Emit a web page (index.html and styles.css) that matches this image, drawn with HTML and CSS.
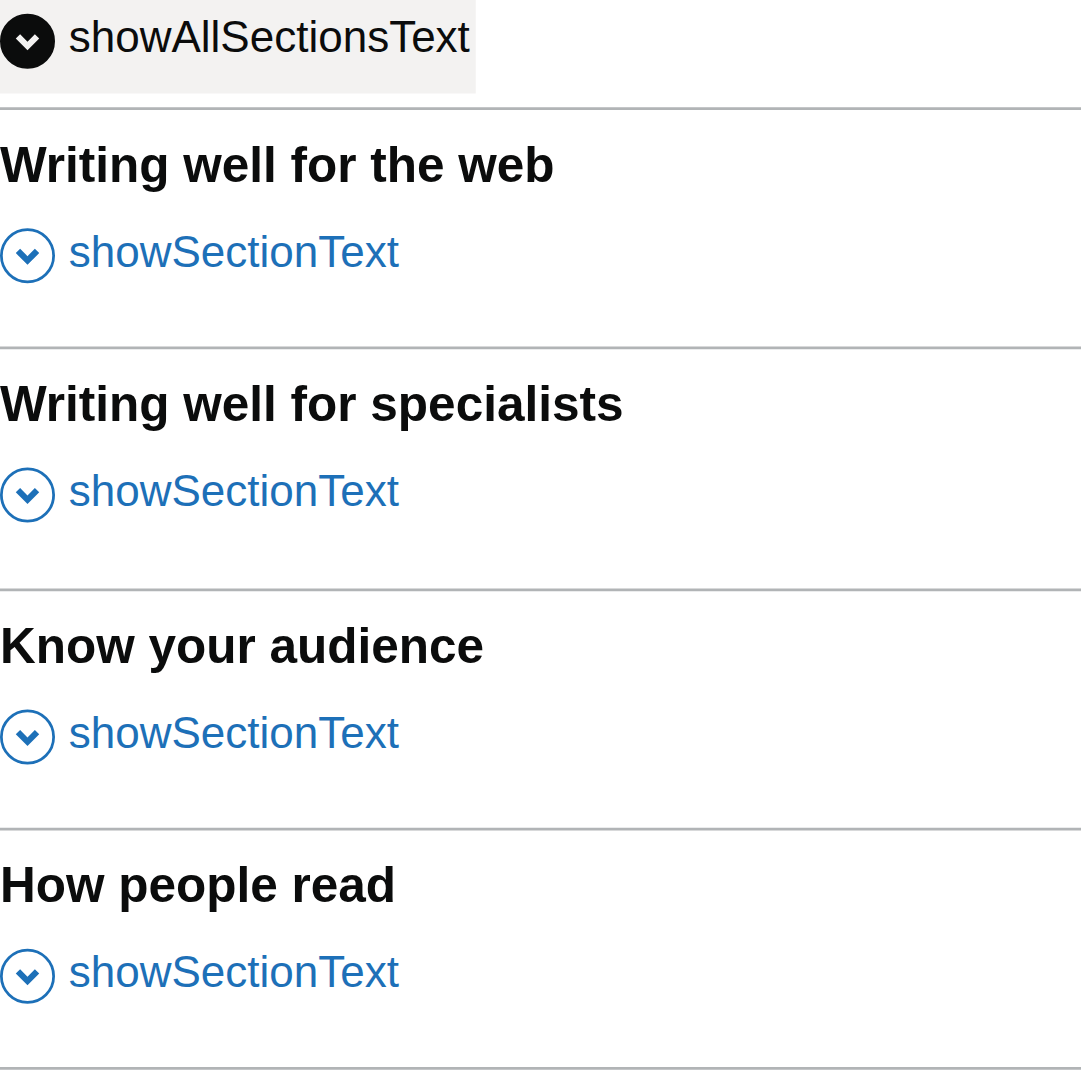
FILE: index.html
```html
<!DOCTYPE html>
<html lang="en">
<head>
<meta charset="utf-8">
<title>Accordion</title>
<link rel="stylesheet" href="styles.css">
</head>
<body>
<svg class="symbols" aria-hidden="true">
  <symbol id="chevron" viewBox="0 0 20 20"><path d="M10 13.3 14.26 9.04 12.68 7.46 10 10.14 7.32 7.46 5.74 9.04Z"/></symbol>
</svg>
<main class="accordion">
  <button class="show-all" type="button"><svg class="icon icon-filled"><circle cx="10" cy="10" r="9.5"/><use href="#chevron"/></svg><span class="label">showAllSectionsText</span></button>
  <div class="sections">
    <section class="section">
      <h2 class="heading">Writing well for the web</h2>
      <div class="toggle"><svg class="icon"><circle cx="10" cy="10" r="9.5"/><use href="#chevron"/></svg><span class="label">showSectionText</span></div>
    </section>
    <section class="section">
      <h2 class="heading">Writing well for specialists</h2>
      <div class="toggle"><svg class="icon"><circle cx="10" cy="10" r="9.5"/><use href="#chevron"/></svg><span class="label">showSectionText</span></div>
    </section>
    <section class="section">
      <h2 class="heading">Know your audience</h2>
      <div class="toggle"><svg class="icon"><circle cx="10" cy="10" r="9.5"/><use href="#chevron"/></svg><span class="label">showSectionText</span></div>
    </section>
    <section class="section">
      <h2 class="heading">How people read</h2>
      <div class="toggle"><svg class="icon"><circle cx="10" cy="10" r="9.5"/><use href="#chevron"/></svg><span class="label">showSectionText</span></div>
    </section>
  </div>
</main>
</body>
</html>
```
FILE: styles.css
```css
body {
  margin: 0;
  height: 1073px;
  overflow: hidden;
  background: #fff;
  color: #0b0c0c;
  font-family: "Liberation Sans", Arial, sans-serif;
}

.symbols {
  display: none;
}

.accordion {
  width: 394px;
  transform: scale(2.75);
  transform-origin: 0 0;
}

.show-all {
  display: flex;
  width: 173px;
  height: 34px;
  margin: 0 0 5px;
  padding: 5px 0 0;
  border: 0;
  background: #f3f2f1;
  color: #0b0c0c;
  font: 16px/20px "Liberation Sans", Arial, sans-serif;
}

.sections {
  display: grid;
  grid-template-rows: 87px 88px 87px 87px;
  border-bottom: 1px solid #b1b4b6;
}

.section {
  border-top: 1px solid #b1b4b6;
}

.heading {
  margin: 10.2px 0 12.8px;
  font-size: 18px;
  line-height: 20px;
  font-weight: 700;
}

.toggle {
  display: flex;
  color: #1d70b8;
  font-size: 16px;
  line-height: 20px;
}

.icon {
  flex: none;
  width: 20px;
  height: 20px;
  margin-right: 5px;
  overflow: visible;
}

.icon circle {
  fill: none;
  stroke: currentColor;
  stroke-width: 1px;
}

.icon use {
  width: 20px;
  height: 20px;
  fill: currentColor;
}

.icon-filled circle {
  fill: currentColor;
}

.icon-filled use {
  fill: #f3f2f1;
}

.label {
  margin-top: -0.8px;
  white-space: nowrap;
}
```
